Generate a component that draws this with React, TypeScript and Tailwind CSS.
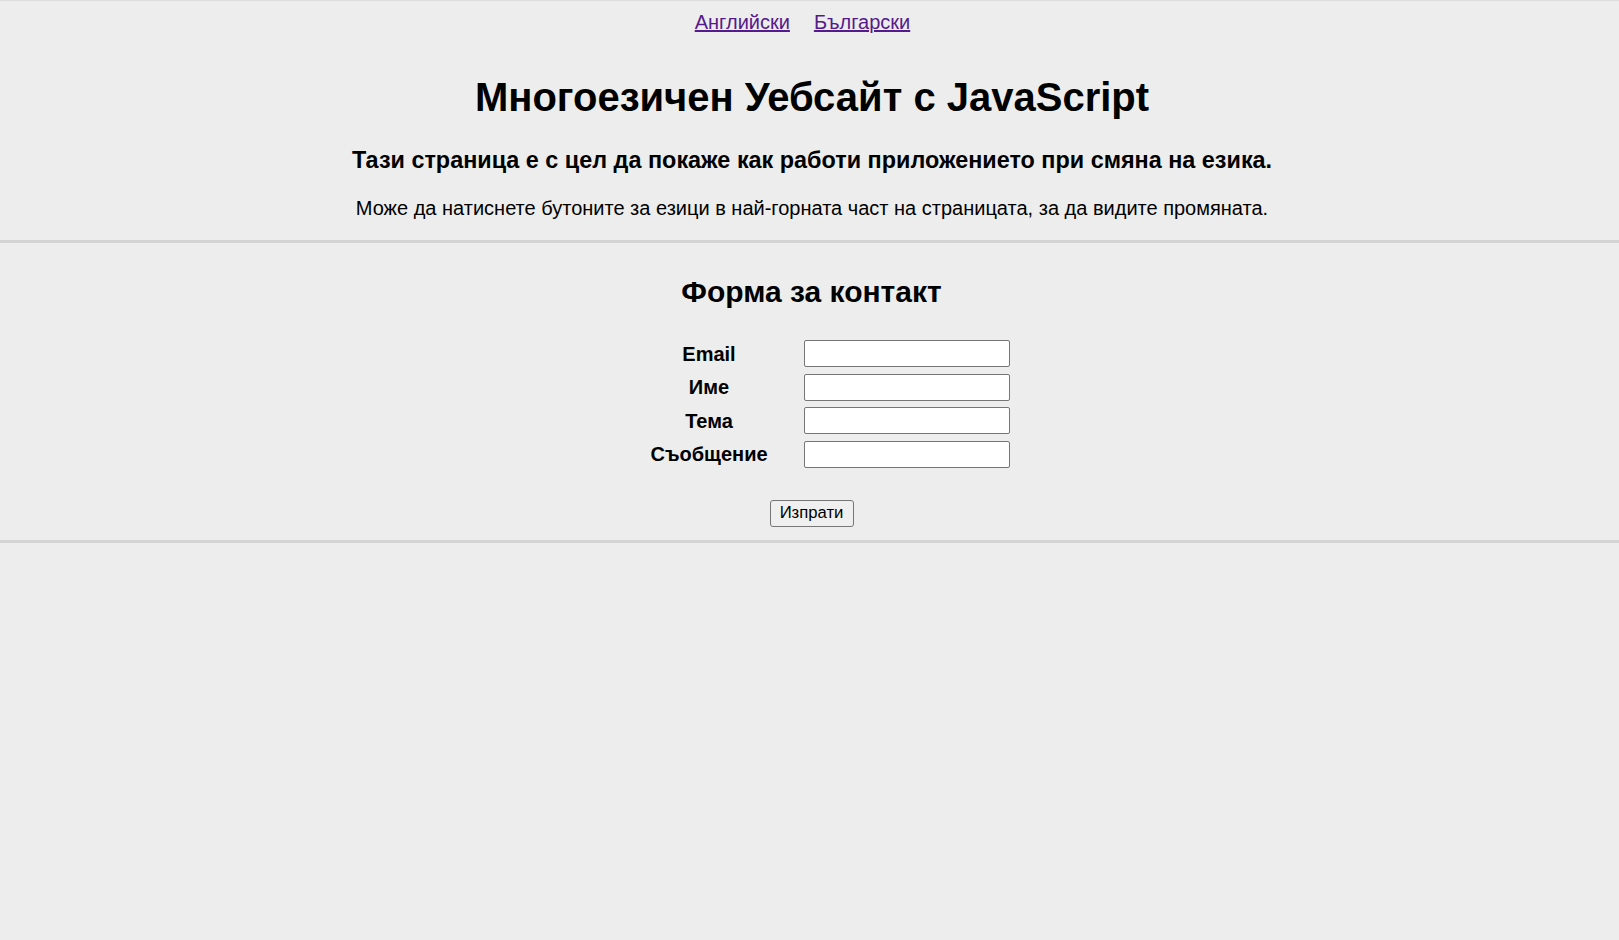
export default function App() {
  const fields = [
    { id: "email", label: "Email" },
    { id: "name", label: "Име" },
    { id: "subject", label: "Тема" },
    { id: "message", label: "Съобщение" },
  ];

  return (
    <div className="min-h-screen bg-[#ededed] border-t border-[#dcdcdc] text-black font-['Liberation_Sans',Arial,sans-serif]">
      {/* Language switcher */}
      <nav className="flex justify-center gap-[24px] pt-[10px] pr-[14px] text-[20px] leading-[23px]">
        <a href="#" className="text-[#551a8b] underline">
          Английски
        </a>
        <a href="#" className="text-[#551a8b] underline">
          Български
        </a>
      </nav>

      {/* Intro */}
      <section className="text-center pl-[5px] pb-[20px] border-b-[3px] border-[#d4d4d4]">
        <h1 className="mt-[40px] text-[40px] leading-[46px] font-bold">
          Многоезичен Уебсайт с JavaScript
        </h1>
        <h3 className="mt-[27px] text-[23.4px] leading-[27px] font-bold">
          Тази страница е с цел да покаже как работи приложението при смяна на езика.
        </h3>
        <p className="mt-[23px] text-[20px] leading-[23px]">
          Може да натиснете бутоните за езици в най-горната част на страницата, за да видите промяната.
        </p>
      </section>

      {/* Contact form */}
      <section className="flex flex-col items-center pl-[4px] pb-[13px] border-b-[3px] border-[#d4d4d4]">
        <h2 className="mt-[31px] text-[30px] leading-[35px] font-bold">Форма за контакт</h2>
        <form className="flex flex-col items-center" onSubmit={(e) => e.preventDefault()}>
          <div className="mt-[31px] pl-[16px] grid grid-cols-[160px_206px] gap-x-[15px] gap-y-[6.67px] items-center">
            {fields.map((f) => (
              <div key={f.id} className="contents">
                <label htmlFor={f.id} className="text-center text-[20px] leading-[22px] font-bold">
                  {f.label}
                </label>
                <input
                  id={f.id}
                  type="text"
                  className="h-[27px] w-[206px] bg-white border border-[#767676] rounded-[2px] px-[2px] text-[16px] outline-none"
                />
              </div>
            ))}
          </div>
          <button
            type="submit"
            className="mt-[32px] h-[27px] w-[84px] bg-[#efefef] border border-[#767676] rounded-[3px] text-[16.67px] leading-[20px]"
          >
            Изпрати
          </button>
        </form>
      </section>
    </div>
  );
}
